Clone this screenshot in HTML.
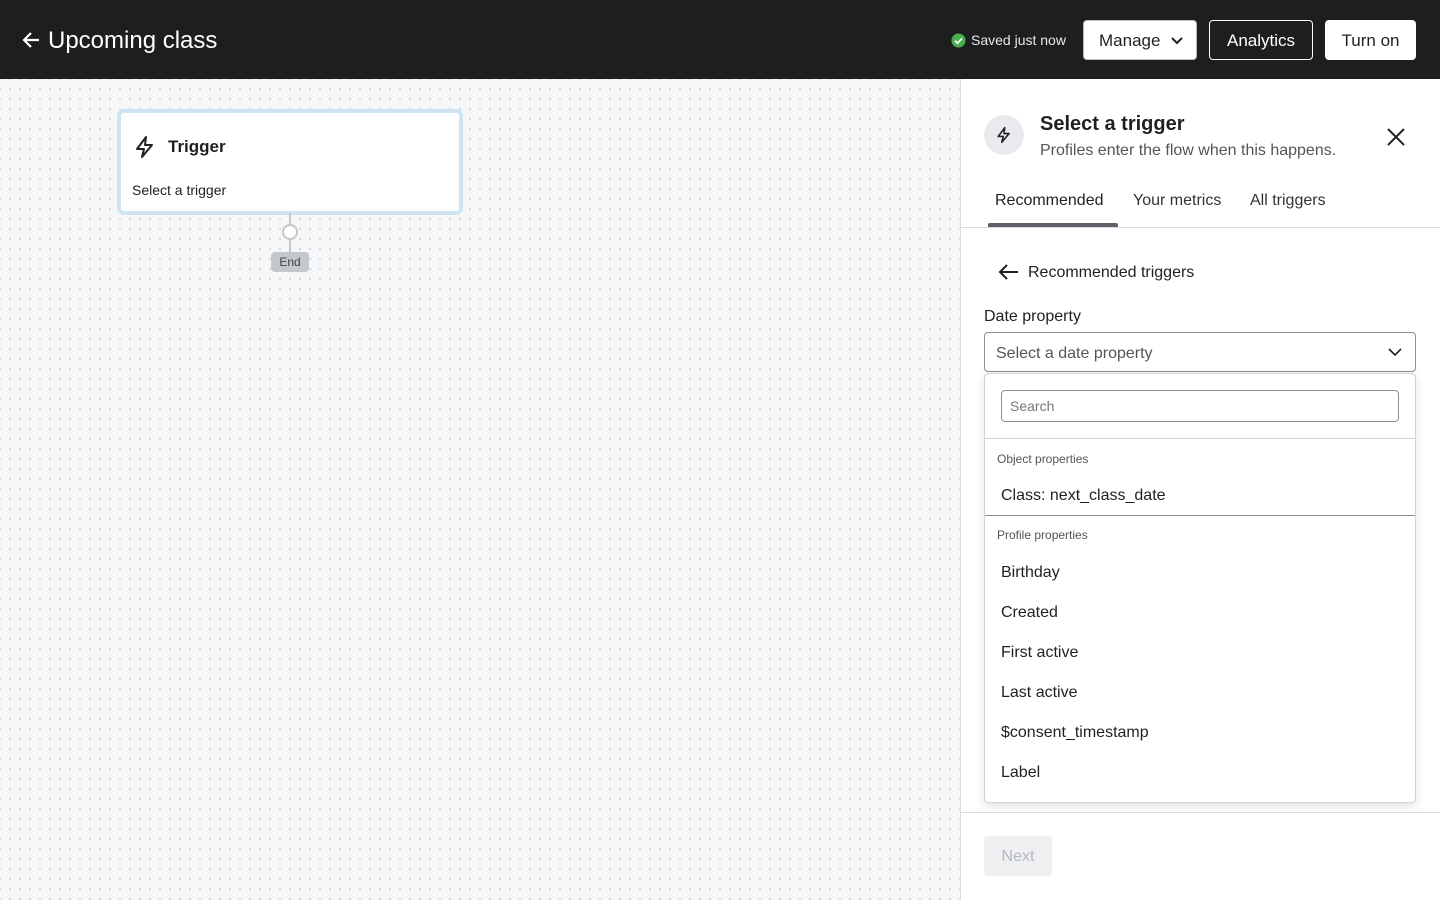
<!DOCTYPE html>
<html><head><style>
*{box-sizing:border-box;margin:0;padding:0}
body{width:1440px;height:900px;overflow:hidden;font-family:"Liberation Sans",sans-serif;color:#1f2024;position:relative;background:#f6f7f9}
.top{position:absolute;left:0;top:0;width:1440px;height:79px;background:#1d1e20;color:#fff}
.canvas{position:absolute;left:0;top:79px;width:961px;height:821px;background-color:#f6f7f9;background-image:radial-gradient(circle,#d3d6db 1px,transparent 1.2px);background-size:10px 10px;background-position:5px 5px}
.panel{position:absolute;left:960px;top:79px;width:480px;height:821px;background:#fff;border-left:1px solid #d8dbe0}
.btn{position:absolute;top:20px;height:40px;border-radius:4px;font-size:17px;display:flex;align-items:center;justify-content:center}
.abs{position:absolute}
.item{position:absolute;left:16px;font-size:16px}
</style></head><body>
<div class="top">
 <svg class="abs" style="left:21px;top:30px" width="20" height="20" viewBox="0 0 20 20"><path d="M18 10H3M10 3L3 10l7 7" stroke="#fff" stroke-width="2.2" fill="none"/></svg>
 <div class="abs" style="left:48px;top:27px;font-size:24px">Upcoming class</div>
 <svg class="abs" style="left:951px;top:33px" width="15" height="15"><circle cx="7.5" cy="7.5" r="7" fill="#4caf50"/><path d="M4 7.7l2.4 2.4 4.6-4.6" stroke="#fff" stroke-width="1.8" fill="none"/></svg>
 <div class="abs" style="left:971px;top:32px;font-size:14px;color:#e8e8e8">Saved just now</div>
 <div class="btn" style="left:1083px;width:114px;background:#fff;color:#1f2024;border:1px solid #bbb;justify-content:flex-start;padding-left:15px;padding-top:2px">Manage<svg style="margin-left:10px" width="14" height="10"><path d="M2 2l5 5 5-5" stroke="#1f2024" stroke-width="2" fill="none"/></svg></div>
 <div class="btn" style="left:1209px;width:104px;border:1px solid #fff;color:#fff;padding-top:2px">Analytics</div>
 <div class="btn" style="left:1325px;width:91px;background:#fff;color:#1f2024;padding-top:2px">Turn on</div>
</div>
<div class="canvas">
 <div class="abs" style="left:117px;top:30px;width:346px;height:106px;background:#fff;border:4px solid #cfe4f3;border-radius:7px">
  <svg class="abs" style="left:13px;top:22px" width="22" height="24" viewBox="0 0 22 24"><path d="M12 2L3 14h7l-2 8 10-12h-7l1-8z" stroke="#1f2024" stroke-width="2" fill="none" stroke-linejoin="round"/></svg>
  <div class="abs" style="left:47px;top:24px;font-size:17px;font-weight:bold">Trigger</div>
  <div class="abs" style="left:11px;top:69px;font-size:14px">Select a trigger</div>
 </div>
 <div class="abs" style="left:289px;top:134px;width:2px;height:40px;background:#c4c6ca"></div>
 <div class="abs" style="left:282px;top:145px;width:16px;height:16px;border-radius:50%;background:#fff;border:2px solid #c4c6ca"></div>
 <div class="abs" style="left:271px;top:173px;width:38px;height:20px;border-radius:4px;background:#c4c7cc;font-size:12px;color:#444;text-align:center;line-height:20px">End</div>
</div>
<div class="panel">
 <div class="abs" style="left:23px;top:36px;width:40px;height:40px;border-radius:50%;background:#e8eaed"></div>
 <svg class="abs" style="left:35px;top:47px" width="16" height="18" viewBox="0 0 22 24"><path d="M12 2L3 14h7l-2 8 10-12h-7l1-8z" stroke="#1f2024" stroke-width="2.2" fill="none" stroke-linejoin="round"/></svg>
 <div class="abs" style="left:79px;top:34px;font-size:20px;font-weight:bold">Select a trigger</div>
 <div class="abs" style="left:79px;top:63px;font-size:16px;color:#555">Profiles enter the flow when this happens.</div>
 <svg class="abs" style="left:425px;top:48px" width="20" height="20"><path d="M2 2l16 16M18 2L2 18" stroke="#1f2024" stroke-width="2"/></svg>
 <div class="abs" style="left:34px;top:113px;font-size:16px">Recommended</div>
 <div class="abs" style="left:172px;top:113px;font-size:16px;color:#333">Your metrics</div>
 <div class="abs" style="left:289px;top:113px;font-size:16px;color:#333">All triggers</div>
 <div class="abs" style="left:27px;top:144px;width:130px;height:4px;background:#5f6065;border-radius:2px 2px 0 0"></div>
 <div class="abs" style="left:0;top:148px;width:479px;height:1px;background:#d8dbe0"></div>
 <svg class="abs" style="left:36px;top:183px" width="22" height="20"><path d="M21 10H3M10 3L3 10l7 7" stroke="#1f2024" stroke-width="2" fill="none"/></svg>
 <div class="abs" style="left:67px;top:185px;font-size:16px">Recommended triggers</div>
 <div class="abs" style="left:23px;top:229px;font-size:16px">Date property</div>
 <div class="abs" style="left:23px;top:253px;width:432px;height:40px;border:1px solid #8a8d92;border-radius:4px;font-size:16px;color:#555;padding:12px 0 0 11px">Select a date property
  <svg class="abs" style="left:402px;top:13px" width="16" height="12"><path d="M2 3l6 6 6-6" stroke="#1f2024" stroke-width="1.6" fill="none"/></svg></div>
 <div class="abs" style="left:0;top:733px;width:479px;height:1px;background:#d8dbe0"></div>
 <div class="abs" style="left:23px;top:757px;width:68px;height:40px;border-radius:4px;background:#eef0f2;color:#b5b8bc;font-size:16px;text-align:center;line-height:42px">Next</div>
 <div class="abs" style="left:23px;top:294px;width:432px;height:430px;background:#fff;border:1px solid #d0d3d8;border-radius:4px;box-shadow:0 3px 10px rgba(0,0,0,.12)">
  <div class="abs" style="left:16px;top:16px;width:398px;height:32px;border:1px solid #8a8d92;border-radius:4px;font-size:14px;color:#777;padding:7px 0 0 8px">Search</div>
  <div class="abs" style="left:0;top:64px;width:430px;height:1px;background:#d0d3d8"></div>
  <div class="abs" style="left:12px;top:78px;font-size:12px;color:#555">Object properties</div>
  <div class="item" style="top:113px">Class: next_class_date</div>
  <div class="abs" style="left:0;top:141px;width:430px;height:1px;background:#8a8d92"></div>
  <div class="abs" style="left:12px;top:154px;font-size:12px;color:#555">Profile properties</div>
  <div class="item" style="top:190px">Birthday</div>
  <div class="item" style="top:230px">Created</div>
  <div class="item" style="top:270px">First active</div>
  <div class="item" style="top:310px">Last active</div>
  <div class="item" style="top:350px">$consent_timestamp</div>
  <div class="item" style="top:390px">Label</div>
 </div>
</div>
</body></html>
